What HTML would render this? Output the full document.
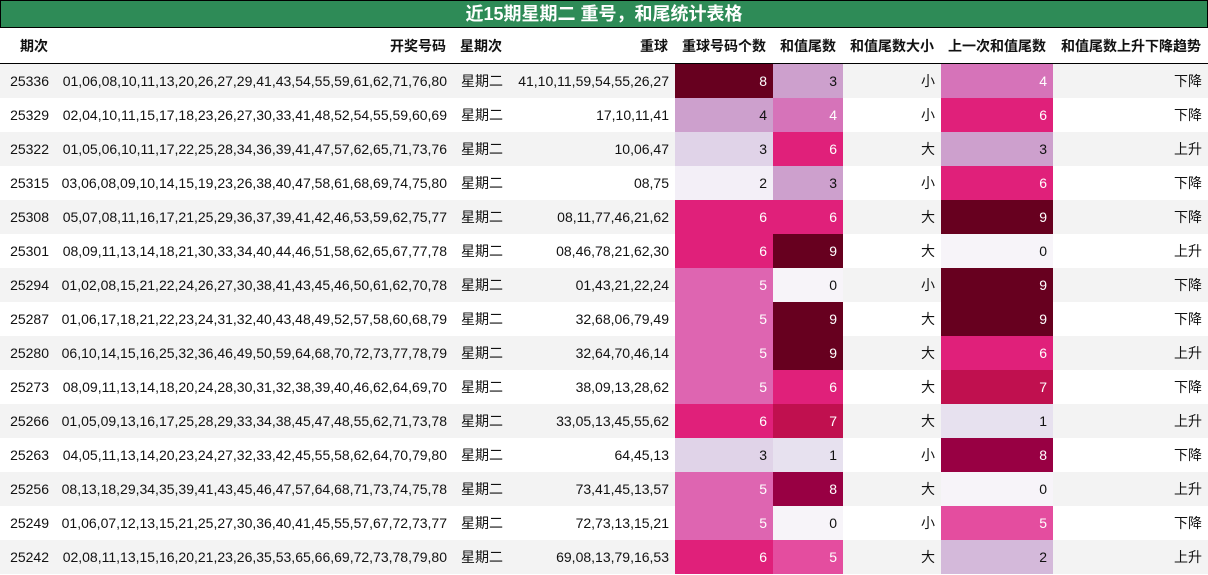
<!DOCTYPE html>
<html><head><meta charset="utf-8"><style>
body{margin:0;width:1208px;height:575px;overflow:hidden;background:#fff;font-family:"Liberation Sans","Noto Sans CJK SC",sans-serif;}
.title{height:26px;background:#2e8b57;border:1px solid #000;color:#fff;font-weight:bold;font-size:18px;text-align:center;line-height:27px;}
table{border-collapse:collapse;table-layout:fixed;width:1208px;font-size:14px;color:#111;}
th{height:35px;font-weight:bold;text-align:right;padding:0 7px 0 0;border-bottom:1.5px solid #000;white-space:nowrap;}
td{height:34px;padding:0 6px 0 0;text-align:right;white-space:nowrap;}
tr.g td{background:#f3f3f3}
td.w{color:#fff}
</style></head><body>
<div class="title">近15期星期二 重号，和尾统计表格</div>
<table>
<colgroup><col style="width:55px"><col style="width:398px"><col style="width:56px"><col style="width:166px"><col style="width:98px"><col style="width:70px"><col style="width:98px"><col style="width:112px"><col style="width:155px"></colgroup>
<tr><th>期次</th><th>开奖号码</th><th>星期次</th><th>重球</th><th>重球号码个数</th><th>和值尾数</th><th>和值尾数大小</th><th>上一次和值尾数</th><th>和值尾数上升下降趋势</th></tr>
<tr class="g"><td>25336</td><td>01,06,08,10,11,13,20,26,27,29,41,43,54,55,59,61,62,71,76,80</td><td>星期二</td><td>41,10,11,59,54,55,26,27</td><td class="w" style="background:#67001f">8</td><td style="background:#cda0cd">3</td><td>小</td><td class="w" style="background:#d673b9">4</td><td>下降</td></tr>
<tr><td>25329</td><td>02,04,10,11,15,17,18,23,26,27,30,33,41,48,52,54,55,59,60,69</td><td>星期二</td><td>17,10,11,41</td><td style="background:#cda0cd">4</td><td class="w" style="background:#d673b9">4</td><td>小</td><td class="w" style="background:#e0207a">6</td><td>下降</td></tr>
<tr class="g"><td>25322</td><td>01,05,06,10,11,17,22,25,28,34,36,39,41,47,57,62,65,71,73,76</td><td>星期二</td><td>10,06,47</td><td style="background:#e0d3e8">3</td><td class="w" style="background:#e0207a">6</td><td>大</td><td style="background:#cda0cd">3</td><td>上升</td></tr>
<tr><td>25315</td><td>03,06,08,09,10,14,15,19,23,26,38,40,47,58,61,68,69,74,75,80</td><td>星期二</td><td>08,75</td><td style="background:#f3eff7">2</td><td style="background:#cda0cd">3</td><td>小</td><td class="w" style="background:#e0207a">6</td><td>下降</td></tr>
<tr class="g"><td>25308</td><td>05,07,08,11,16,17,21,25,29,36,37,39,41,42,46,53,59,62,75,77</td><td>星期二</td><td>08,11,77,46,21,62</td><td class="w" style="background:#e0207a">6</td><td class="w" style="background:#e0207a">6</td><td>大</td><td class="w" style="background:#67001f">9</td><td>下降</td></tr>
<tr><td>25301</td><td>08,09,11,13,14,18,21,30,33,34,40,44,46,51,58,62,65,67,77,78</td><td>星期二</td><td>08,46,78,21,62,30</td><td class="w" style="background:#e0207a">6</td><td class="w" style="background:#67001f">9</td><td>大</td><td style="background:#f7f4f9">0</td><td>上升</td></tr>
<tr class="g"><td>25294</td><td>01,02,08,15,21,22,24,26,27,30,38,41,43,45,46,50,61,62,70,78</td><td>星期二</td><td>01,43,21,22,24</td><td class="w" style="background:#de65b1">5</td><td style="background:#f7f4f9">0</td><td>小</td><td class="w" style="background:#67001f">9</td><td>下降</td></tr>
<tr><td>25287</td><td>01,06,17,18,21,22,23,24,31,32,40,43,48,49,52,57,58,60,68,79</td><td>星期二</td><td>32,68,06,79,49</td><td class="w" style="background:#de65b1">5</td><td class="w" style="background:#67001f">9</td><td>大</td><td class="w" style="background:#67001f">9</td><td>下降</td></tr>
<tr class="g"><td>25280</td><td>06,10,14,15,16,25,32,36,46,49,50,59,64,68,70,72,73,77,78,79</td><td>星期二</td><td>32,64,70,46,14</td><td class="w" style="background:#de65b1">5</td><td class="w" style="background:#67001f">9</td><td>大</td><td class="w" style="background:#e0207a">6</td><td>上升</td></tr>
<tr><td>25273</td><td>08,09,11,13,14,18,20,24,28,30,31,32,38,39,40,46,62,64,69,70</td><td>星期二</td><td>38,09,13,28,62</td><td class="w" style="background:#de65b1">5</td><td class="w" style="background:#e0207a">6</td><td>大</td><td class="w" style="background:#c0104f">7</td><td>下降</td></tr>
<tr class="g"><td>25266</td><td>01,05,09,13,16,17,25,28,29,33,34,38,45,47,48,55,62,71,73,78</td><td>星期二</td><td>33,05,13,45,55,62</td><td class="w" style="background:#e0207a">6</td><td class="w" style="background:#c0104f">7</td><td>大</td><td style="background:#e7e1ef">1</td><td>上升</td></tr>
<tr><td>25263</td><td>04,05,11,13,14,20,23,24,27,32,33,42,45,55,58,62,64,70,79,80</td><td>星期二</td><td>64,45,13</td><td style="background:#e0d3e8">3</td><td style="background:#e7e1ef">1</td><td>小</td><td class="w" style="background:#980043">8</td><td>下降</td></tr>
<tr class="g"><td>25256</td><td>08,13,18,29,34,35,39,41,43,45,46,47,57,64,68,71,73,74,75,78</td><td>星期二</td><td>73,41,45,13,57</td><td class="w" style="background:#de65b1">5</td><td class="w" style="background:#980043">8</td><td>大</td><td style="background:#f7f4f9">0</td><td>上升</td></tr>
<tr><td>25249</td><td>01,06,07,12,13,15,21,25,27,30,36,40,41,45,55,57,67,72,73,77</td><td>星期二</td><td>72,73,13,15,21</td><td class="w" style="background:#de65b1">5</td><td style="background:#f7f4f9">0</td><td>小</td><td class="w" style="background:#e44d9f">5</td><td>下降</td></tr>
<tr class="g"><td>25242</td><td>02,08,11,13,15,16,20,21,23,26,35,53,65,66,69,72,73,78,79,80</td><td>星期二</td><td>69,08,13,79,16,53</td><td class="w" style="background:#e0207a">6</td><td class="w" style="background:#e44d9f">5</td><td>大</td><td style="background:#d4b9da">2</td><td>上升</td></tr>
</table>
</body></html>
